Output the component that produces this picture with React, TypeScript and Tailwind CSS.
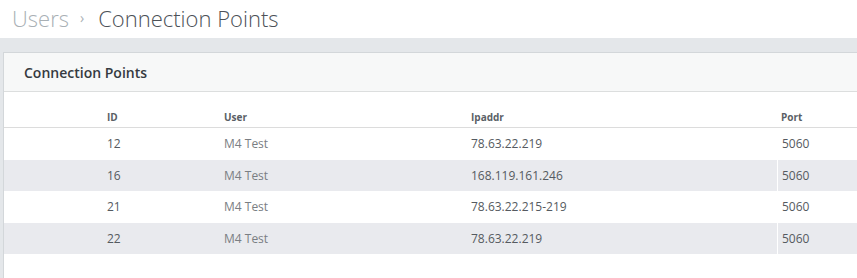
import React from 'react';

const rows = [
  { id: 12, user: 'M4 Test', ip: '78.63.22.219', port: 5060, h: 'h-[32px]' },
  { id: 16, user: 'M4 Test', ip: '168.119.161.246', port: 5060, h: 'h-[31px]' },
  { id: 21, user: 'M4 Test', ip: '78.63.22.215-219', port: 5060, h: 'h-[32px]' },
  { id: 22, user: 'M4 Test', ip: '78.63.22.219', port: 5060, h: 'h-[31px]' },
];

export default function App() {
  return (
    <div className="w-[857px] h-[278px] overflow-hidden bg-white" style={{ fontFamily: '"Open Sans", sans-serif' }}>
      <div className="h-[38px] flex items-center pl-[12px] pb-[2px] bg-white">
        <span className="text-[22px] font-light text-[#a9b0b5] leading-none">Users</span>
        <span className="text-[14px] text-[#a9b0b5] ml-[11px] mr-[14px] leading-none">›</span>
        <span className="text-[22px] font-light text-[#4c5157] leading-none">Connection Points</span>
      </div>
      <div className="bg-[#e4e7ea] pt-[14px] pl-[3px] h-[240px]">
        <div className="bg-white border-t border-l border-[#d3d7da] h-full">
          <div className="h-[39px] bg-[#f7f8f8] border-b border-[#dcdede] flex items-center pl-[20px]">
            <span className="text-[14px] font-semibold text-[#353a40]">Connection Points</span>
          </div>
          <div className="grid grid-cols-[99px_117px_247px_310px_1fr] h-[36px] border-b border-[#dcdcdc] items-end pb-[2px] text-[10px] font-bold text-[#5a5f66]">
            <div />
            <div className="pl-[4px]">ID</div>
            <div className="pl-[4px]">User</div>
            <div className="pl-[4px]">Ipaddr</div>
            <div className="pl-[4px]">Port</div>
          </div>
          {rows.map((r, i) => (
            <div
              key={r.id}
              className={`grid grid-cols-[99px_117px_247px_310px_1fr] items-center text-[12px] ${r.h} ${i % 2 === 1 ? 'bg-[#e9eaee]' : 'bg-white'}`}
            >
              <div />
              <div className="pl-[4px] text-[#555a60]">{r.id}</div>
              <div className="pl-[4px] text-[#7a7e83]">{r.user}</div>
              <div className="pl-[4px] text-[#555a60]">{r.ip}</div>
              <div className="pl-[4px] h-full flex items-center border-l border-white text-[#555a60]">{r.port}</div>
            </div>
          ))}
        </div>
      </div>
    </div>
  );
}
